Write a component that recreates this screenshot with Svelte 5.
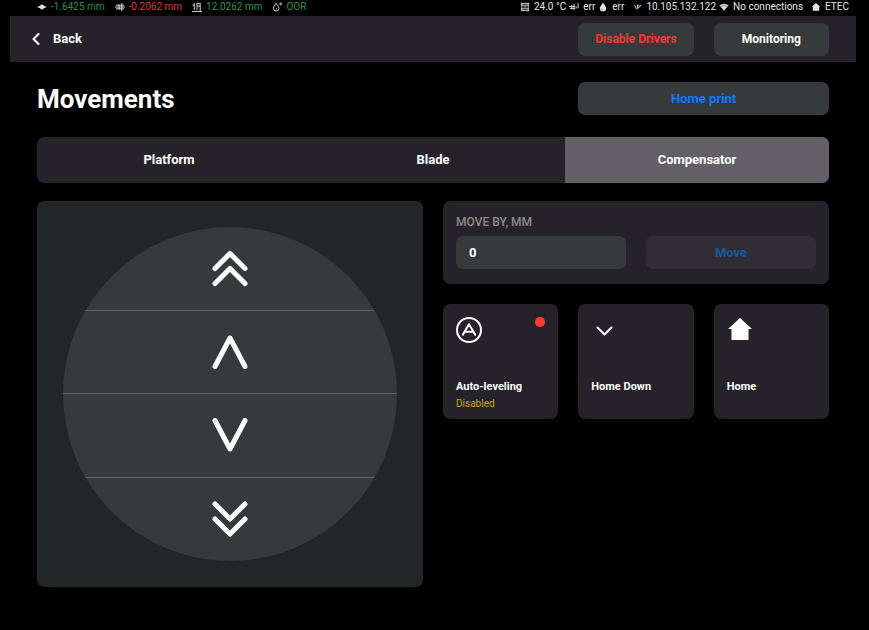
<script lang="ts">
	const tabs = ['Platform', 'Blade', 'Compensator'];
	let active = $state('Compensator');
	let distance = $state('0');

	const positions = [
		{ icon: 'platform', value: '-1.6425 mm', state: 'ok' },
		{ icon: 'blade', value: '-0.2062 mm', state: 'bad' },
		{ icon: 'level', value: '12.0262 mm', state: 'ok' },
		{ icon: 'drop', value: 'OOR', state: 'ok' }
	];

	const sensors = [
		{ icon: 'chamber', value: '24.0 °C' },
		{ icon: 'heater', value: 'err' },
		{ icon: 'resin', value: 'err' }
	];

	const moves = [
		{ label: 'Move up fast', paths: ['M3 19.500 18 4.500 33 19.500', 'M3 34.500 18 19.500 33 34.500'] },
		{ label: 'Move up', paths: ['M3 33.500 18 5 33 33.500'] },
		{ label: 'Move down', paths: ['M3 4.500 18 33 33 4.500'] },
		{ label: 'Move down fast', paths: ['M3 4 18 19 33 4', 'M3 19 18 34 33 19'] }
	];
</script>

{#snippet statusIcon(name: string)}
	<svg class="status-icon" viewBox="0 0 11 11" aria-hidden="true">
		{#if name === 'platform'}
			<path d="M.5 5.500h10M2 5.500 5.500 3 9 5.500 5.500 8Z" fill="currentColor" />
		{:else if name === 'blade'}
			<path d="M0 5.500h11M1 3.500h9M1 7.500h9M4.500 2.500v6M7.500 1v9" />
		{:else if name === 'level'}
			<path d="M2.500 1v8M5.500 1v8M9 1v9M.5 3.500h2M5.500 1.500H9M5.500 4.500H9M0 10.500h11" />
		{:else if name === 'drop'}
			<path d="M4.500 1.500C3 4 1.500 5 1.500 7a3 3 0 0 0 6 0c0-2-1.500-3-3-5.500ZM4 8.500l1.500-1.500" />
			<circle cx="9.500" cy="2" r="1" />
		{:else if name === 'chamber'}
			<path d="M1 1.500h9M1 9.500h9M1.500 3.500h8M1.500 7.500h8M2 1v9M9 1v9M4 5.500h3" />
		{:else if name === 'heater'}
			<path d="M0 5h7M1 7h6M3 3v5M5.500 2v7M8 7V5M10 1v6" />
		{:else if name === 'resin'}
			<path d="M5.500.5C4 3.500 2 4.500 2 7a3.500 3.500 0 0 0 7 0C9 4.500 7 3.500 5.500.5Z" fill="currentColor" stroke="none" />
			<path d="M4 7c0 1 .5 1.500 1 1.800" stroke="#777" />
		{:else if name === 'network'}
			<path d="M3 3.500 5 8M6 3v4l2-1 2-3M7.500 3v2" />
		{:else if name === 'wifi'}
			<path d="M.5 3.800Q5.500-.2 10.500 3.800L5.500 9.500Z" fill="#ddd" stroke="none" />
			<path d="M2 5Q5.500 2.500 9 5" stroke="#777" />
		{:else if name === 'home'}
			<path d="M5.500 1 .8 5.300H2V9.500h7V5.300h1.200Z" fill="currentColor" stroke="none" />
		{/if}
	</svg>
{/snippet}

<div class="screen">
	<div class="status">
		<div class="group positions">
			{#each positions as item}
				<span class="item">{@render statusIcon(item.icon)}<span class={item.state}>{item.value}</span></span>
			{/each}
		</div>
		<div class="group">
			<div class="group sensors">
				{#each sensors as item}
					<span class="item">{@render statusIcon(item.icon)}{item.value}</span>
				{/each}
			</div>
			<div class="group sensors">
				<span class="item">{@render statusIcon('network')}10.105.132.122</span>
				<span class="item">{@render statusIcon('wifi')}No connections</span>
			</div>
			<span class="item">{@render statusIcon('home')}ETEC</span>
		</div>
	</div>

	<header class="columns">
		<button class="back">
			<svg viewBox="0 0 8 12" aria-hidden="true"><path d="M6.500 1 1.500 6l5 5" /></svg>
			Back
		</button>
		<button class="button danger">Disable Drivers</button>
		<button class="button monitoring">Monitoring</button>
	</header>

	<main>
		<div class="columns">
			<h1>Movements</h1>
			<button class="button home-print">Home print</button>
		</div>

		<div class="tabs" role="tablist">
			{#each tabs as tab}
				<button role="tab" aria-selected={active === tab} class:active={active === tab} onclick={() => (active = tab)}>
					{tab}
				</button>
			{/each}
		</div>

		<div class="panels">
			<section class="jog">
				<div class="wheel">
					{#each moves as move}
						<button aria-label={move.label}>
							<svg viewBox="0 0 36 38" aria-hidden="true">
								{#each move.paths as d}
									<path {d} />
								{/each}
							</svg>
						</button>
					{/each}
				</div>
			</section>

			<div class="side">
				<section class="move-by">
					<label for="distance">MOVE BY, MM</label>
					<div class="fields">
						<input id="distance" type="text" inputmode="decimal" bind:value={distance} />
						<button class="button" disabled>Move</button>
					</div>
				</section>

				<div class="tiles">
					<button class="tile">
						<span class="tile-top">
							<svg viewBox="0 0 26 26" aria-hidden="true">
								<circle cx="13" cy="13" r="12" />
								<path d="M6.800 17.800 13 7.200l6.200 10.600M9.500 14.800h7" />
							</svg>
							<span class="dot"></span>
						</span>
						<span>Auto-leveling</span>
						<span class="note">Disabled</span>
					</button>
					<button class="tile">
						<span class="tile-top">
							<svg viewBox="0 0 26 26" aria-hidden="true"><path d="m6.500 10.500 7 7 7-7" /></svg>
						</span>
						<span>Home Down</span>
					</button>
					<button class="tile">
						<span class="tile-top">
							<svg viewBox="0 0 26 26" aria-hidden="true">
								<path class="solid" d="M13 1 1 12h3.500v11h17V12H25Z" />
							</svg>
						</span>
						<span>Home</span>
					</button>
				</div>
			</div>
		</div>
	</main>
</div>

<style>
	:global(body) {
		background: #000;
	}

	.screen {
		padding: 0 13px 24px 10px;
		color: #fff;
		font-family: Roboto, 'Liberation Sans', sans-serif;
		font-size: 13px;
		font-weight: 700;
		line-height: 16px;
	}

	button,
	input {
		box-sizing: border-box;
		margin: 0;
		padding: 0;
		border: 0;
		color: inherit;
		font: inherit;
	}

	button {
		background: none;
	}

	svg {
		fill: none;
		stroke: currentColor;
		stroke-linecap: round;
		stroke-linejoin: round;
	}

	.status {
		display: flex;
		justify-content: space-between;
		height: 16px;
		padding: 0 7px 0 27px;
		box-sizing: border-box;
		color: #e4e4e4;
		font-size: 10px;
		font-weight: 400;
		line-height: 14px;
		white-space: nowrap;
	}

	.group {
		display: flex;
		gap: 8px;
	}

	.positions {
		gap: 10px;
	}

	.sensors {
		gap: 3px;
	}

	.item {
		display: flex;
		gap: 4px;
	}

	.status-icon {
		width: 10px;
		height: 10px;
		margin-top: 2px;
		stroke-width: 1;
		stroke-linecap: butt;
	}

	.ok {
		color: #289448;
	}

	.bad {
		color: #e23630;
	}

	.columns {
		display: grid;
		grid-template-columns: repeat(6, minmax(0, 1fr));
		align-items: center;
		gap: 20px;
	}

	header {
		height: 46px;
		padding: 0 27px;
		background: #252329;
	}

	.back {
		display: flex;
		align-items: center;
		grid-column: span 4;
		justify-self: start;
		gap: 13px;
		padding-left: 22px;
		margin-left: -27px;
	}

	.back svg {
		width: 8px;
		height: 12px;
		stroke-width: 2;
	}

	.button {
		height: 33px;
		border-radius: 7px;
		background: #363a3b;
	}

	.danger,
	.monitoring {
		font-size: 12px;
	}

	.danger {
		color: #f23a32;
	}

	main {
		padding: 20px 27px 0;
	}

	h1 {
		grid-column: span 4;
		margin: 0;
		font-size: 26px;
		font-weight: 700;
		line-height: 32px;
	}

	.home-print {
		grid-column: span 2;
		color: #0a7aff;
	}

	.tabs {
		display: grid;
		grid-template-columns: repeat(3, 1fr);
		height: 46px;
		margin: 22px 0 18px;
		border-radius: 7px;
		overflow: hidden;
		background: #252329;
	}

	.tabs .active {
		background: #626066;
	}

	.panels {
		display: grid;
		grid-template-columns: repeat(2, minmax(0, 1fr));
		align-items: start;
		gap: 20px;
	}

	.jog {
		padding: 26px;
		border-radius: 7px;
		background: #222627;
	}

	.wheel {
		display: grid;
		grid-template-rows: repeat(4, minmax(0, 1fr));
		aspect-ratio: 1;
		border-radius: 50%;
		overflow: hidden;
		background: #363a3b;
	}

	.wheel button {
		display: grid;
		place-items: center;
	}

	.wheel button:not(:last-child) {
		border-bottom: 1px solid #626066;
	}

	.wheel svg {
		width: 36px;
		height: 38px;
		stroke-width: 5;
	}

	.side {
		display: grid;
		gap: 20px;
	}

	.move-by {
		padding: 13px 13px 15px;
		border-radius: 7px;
		background: #252329;
	}

	.move-by label {
		display: block;
		margin-bottom: 6px;
		color: #8c8b8e;
		font-size: 12px;
		font-weight: 500;
		line-height: 16px;
	}

	.fields {
		display: grid;
		grid-template-columns: repeat(2, minmax(0, 1fr));
		gap: 20px;
	}

	.fields input {
		height: 33px;
		padding: 0 13px;
		border-radius: 7px;
		background: #363a3b;
	}

	.fields button {
		background: #302e34;
		color: #18569b;
	}

	.tiles {
		display: grid;
		grid-template-columns: repeat(3, minmax(0, 1fr));
		gap: 20px;
	}

	.tile {
		display: flex;
		flex-direction: column;
		aspect-ratio: 1;
		padding: 13px 13px 6px;
		border-radius: 7px;
		background: #252329;
		font-size: 11px;
		text-align: left;
		white-space: nowrap;
	}

	.tile-top {
		display: flex;
		justify-content: space-between;
		height: 62px;
	}

	.tile svg {
		width: 26px;
		height: 26px;
		stroke-width: 2;
	}

	.solid {
		fill: currentColor;
		stroke: none;
	}

	.dot {
		width: 10px;
		height: 10px;
		border-radius: 50%;
		background: #ff3b30;
	}

	.note {
		color: #c9a90c;
		font-size: 10px;
		font-weight: 400;
		line-height: 18px;
	}
</style>
